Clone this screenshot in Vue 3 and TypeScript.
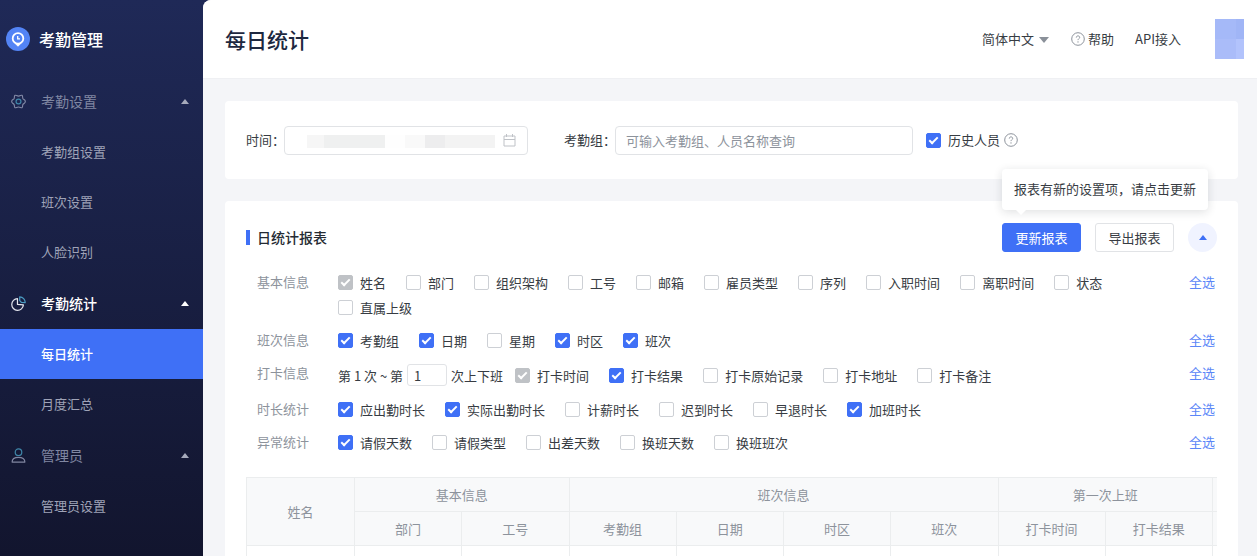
<script setup lang="ts">
import { ref } from 'vue'

interface Option {
  label: string
  checked?: boolean
  locked?: boolean
}
interface OptionRow {
  label: string
  range?: boolean
  options: Option[]
}
interface MenuGroup {
  title: string
  icon: 'gear' | 'pie' | 'user'
  current?: boolean
  items: { title: string; active?: boolean }[]
}

const menu: MenuGroup[] = [
  { title: '考勤设置', icon: 'gear', items: [{ title: '考勤组设置' }, { title: '班次设置' }, { title: '人脸识别' }] },
  { title: '考勤统计', icon: 'pie', current: true, items: [{ title: '每日统计', active: true }, { title: '月度汇总' }] },
  { title: '管理员', icon: 'user', items: [{ title: '管理员设置' }] },
]

const rows = ref<OptionRow[]>([
  {
    label: '基本信息',
    options: [
      { label: '姓名', checked: true, locked: true },
      { label: '部门' },
      { label: '组织架构' },
      { label: '工号' },
      { label: '邮箱' },
      { label: '雇员类型' },
      { label: '序列' },
      { label: '入职时间' },
      { label: '离职时间' },
      { label: '状态' },
      { label: '直属上级' },
    ],
  },
  {
    label: '班次信息',
    options: [
      { label: '考勤组', checked: true },
      { label: '日期', checked: true },
      { label: '星期' },
      { label: '时区', checked: true },
      { label: '班次', checked: true },
    ],
  },
  {
    label: '打卡信息',
    range: true,
    options: [
      { label: '打卡时间', checked: true, locked: true },
      { label: '打卡结果', checked: true },
      { label: '打卡原始记录' },
      { label: '打卡地址' },
      { label: '打卡备注' },
    ],
  },
  {
    label: '时长统计',
    options: [
      { label: '应出勤时长', checked: true },
      { label: '实际出勤时长', checked: true },
      { label: '计薪时长' },
      { label: '迟到时长' },
      { label: '早退时长' },
      { label: '加班时长', checked: true },
    ],
  },
  {
    label: '异常统计',
    options: [
      { label: '请假天数', checked: true },
      { label: '请假类型' },
      { label: '出差天数' },
      { label: '换班天数' },
      { label: '换班班次' },
    ],
  },
])

const subColumns = ['部门', '工号', '考勤组', '日期', '时区', '班次', '打卡时间', '打卡结果']
const history = ref(true)
const times = ref('1')

function selectAll(row: OptionRow) {
  row.options.forEach((o) => {
    if (!o.locked) o.checked = true
  })
}
</script>

<template>
  <div class="layout">
    <aside class="sidebar">
      <div class="brand">
        <svg class="brand-logo" viewBox="0 0 24 24">
          <circle cx="12" cy="12" r="12" fill="#5384f5" />
          <path d="M12 19.200 8.200 15.500h7.600z" fill="#fff" stroke="#fff" stroke-linejoin="round" />
          <circle cx="12" cy="11.400" r="5.300" fill="#5384f5" stroke="#fff" stroke-width="1.800" />
          <path d="M11.700 9v2.800H14" fill="none" stroke="#fff" stroke-width="1.300" />
        </svg>
        <span>考勤管理</span>
      </div>
      <nav>
        <section v-for="group in menu" :key="group.title">
          <button type="button" class="group" :class="{ current: group.current }">
            <svg v-if="group.icon === 'gear'" class="group-icon" viewBox="0 0 16 16" fill="none">
              <path
                d="M4.300 1.400C5.200.9 6.200 2.200 8 2.200s2.800-1.300 3.700-.8c1.200.7.300 2.200 1 3.500.8 1.300 2.600 1.100 2.600 3.100s-1.800 1.800-2.600 3.100c-.7 1.300.2 2.800-1 3.500-.9.500-1.900-.8-3.700-.8s-2.800 1.300-3.700.8c-1.200-.7-.3-2.200-1-3.500C2.500 9.800.7 10 .7 8s1.800-1.800 2.600-3.100c.7-1.300-.2-2.800 1-3.500z"
                stroke="#8289a6"
                stroke-width="1.200"
              />
              <circle cx="8" cy="8" r="2.600" stroke="#3f86a8" stroke-width="1.300" />
            </svg>
            <svg v-else-if="group.icon === 'pie'" class="group-icon" viewBox="0 0 16 16" fill="none">
              <path d="M6.900 2.900A6.200 6.200 0 1 0 13.200 9.500L6.900 9z" stroke="#e4e6ee" stroke-width="1.300" stroke-linejoin="round" />
              <path d="M9.300.9a6 6 0 0 1 5.900 6.100l-4.200-.3-1.700-1.700z" stroke="#4b9cc2" stroke-width="1.300" stroke-linejoin="round" />
            </svg>
            <svg v-else class="group-icon" viewBox="0 0 16 16" fill="none">
              <circle cx="8" cy="4.500" r="3.500" stroke="#3f86a8" stroke-width="1.300" />
              <path d="M1.200 15c0-3.200 2.600-5 6.800-5s6.800 1.800 6.800 5z" stroke="#8085a0" stroke-width="1.300" stroke-linejoin="round" />
            </svg>
            <span class="group-title">{{ group.title }}</span>
            <svg class="group-caret" viewBox="0 0 8 5"><path d="M4 0 8 5H0z" fill="currentColor" /></svg>
          </button>
          <a v-for="item in group.items" :key="item.title" href="#" class="item" :class="{ active: item.active }">{{ item.title }}</a>
        </section>
      </nav>
    </aside>

    <main class="main">
      <header class="header">
        <h1>每日统计</h1>
        <div class="tools">
          <div class="lang">
            <select aria-label="语言">
              <option>简体中文</option>
            </select>
            <svg viewBox="0 0 10 6"><path d="M0 0h10L5 6z" fill="#8a9099" /></svg>
          </div>
          <a href="#" class="help">
            <svg class="question" viewBox="0 0 14 14" fill="none">
              <circle cx="7" cy="7" r="6.300" stroke="currentColor" />
              <path d="M5.300 5.600C5.300 4.500 6 3.900 7 3.900s1.700.6 1.700 1.500c0 1.200-1.700 1.300-1.700 2.700" stroke="currentColor" />
              <circle cx="7" cy="9.900" r=".7" fill="currentColor" />
            </svg>
            帮助
          </a>
          <a href="#" class="api">API接入</a>
          <svg class="avatar" viewBox="0 0 29 40" preserveAspectRatio="none">
            <path d="M0 0h29v40H0z" fill="#a5b9f8" />
            <path d="M0 20h29v20H0z" fill="#aabcf9" />
            <path d="M21 0h8v20h-8z" fill="#a0b5f6" />
            <path d="M21 20h8v20h-8z" fill="#b2c3fc" />
          </svg>
        </div>
      </header>

      <form class="card filters" @submit.prevent>
        <label class="short" for="date">时间：</label>
        <div class="field date">
          <input id="date" type="text" readonly />
          <span class="mask"><i /><i /><i /><i /><i /><i /></span>
          <svg class="calendar" viewBox="0 0 13 13" fill="none" stroke="#bfc2c7">
            <path d="M1 2h11v10H1zM1 5.500h11M3.500 0v3M9.500 0v3" />
          </svg>
        </div>
        <label class="long" for="group">考勤组：</label>
        <div class="field search">
          <input id="group" type="text" placeholder="可输入考勤组、人员名称查询" />
        </div>
        <label class="check"><input v-model="history" type="checkbox" />历史人员</label>
        <svg class="question" viewBox="0 0 14 14" fill="none">
          <circle cx="7" cy="7" r="6.300" stroke="currentColor" />
          <path d="M5.300 5.600C5.300 4.500 6 3.900 7 3.900s1.700.6 1.700 1.500c0 1.200-1.700 1.300-1.700 2.700" stroke="currentColor" />
          <circle cx="7" cy="9.900" r=".7" fill="currentColor" />
        </svg>
      </form>

      <section class="card report">
        <div class="report-head">
          <h2>日统计报表</h2>
          <div class="actions">
            <div class="update">
              <button type="button" class="btn primary">更新报表</button>
              <div class="tip" role="tooltip">报表有新的设置项，请点击更新</div>
            </div>
            <button type="button" class="btn">导出报表</button>
            <button type="button" class="fold" aria-label="收起">
              <svg viewBox="0 0 8 5"><path d="M4 0 8 5H0z" fill="#3f70f6" /></svg>
            </button>
          </div>
        </div>

        <div class="rows">
          <div v-for="row in rows" :key="row.label" class="row">
            <span class="row-label">{{ row.label }}</span>
            <div class="options" :class="{ ranged: row.range }">
              <label v-if="row.range" class="range">
                第 1 次 ~ 第
                <input v-model="times" class="times" type="text" />
                次上下班
              </label>
              <label v-for="o in row.options" :key="o.label" class="check">
                <input v-model="o.checked" type="checkbox" :disabled="o.locked" />{{ o.label }}
              </label>
            </div>
            <button type="button" class="all" @click="selectAll(row)">全选</button>
          </div>
        </div>

        <table>
          <colgroup>
            <col class="col-name" />
            <col v-for="c in subColumns" :key="c" />
            <col class="col-rest" />
          </colgroup>
          <thead>
            <tr>
              <th rowspan="2">姓名</th>
              <th colspan="2">基本信息</th>
              <th colspan="4">班次信息</th>
              <th colspan="2">第一次上班</th>
              <th></th>
            </tr>
            <tr>
              <th v-for="c in subColumns" :key="c">{{ c }}</th>
              <th></th>
            </tr>
          </thead>
          <tbody>
            <tr>
              <td v-for="n in subColumns.length + 2" :key="n"></td>
            </tr>
          </tbody>
        </table>
      </section>
    </main>
  </div>
</template>

<style>
body {
  margin: 0;
  background: #1b2149;
}
</style>

<style scoped>
* {
  box-sizing: border-box;
}
.layout {
  display: flex;
  height: 100vh;
  overflow: hidden;
  background: linear-gradient(#1f2957, #12152e);
  font: 13px/20px 'Noto Sans CJK SC', sans-serif;
  color: #373c43;
}
button,
input,
select {
  margin: 0;
  padding: 0;
  border: 0;
  background: none;
  font: inherit;
  color: inherit;
}
button {
  cursor: pointer;
}
a {
  color: inherit;
  text-decoration: none;
}

.sidebar {
  flex: 0 0 203px;
}
.brand {
  display: flex;
  align-items: center;
  gap: 9px;
  height: 75px;
  padding: 2px 0 0 6px;
  font-size: 16px;
  font-weight: 500;
  color: #fff;
}
.brand-logo {
  width: 24px;
  height: 24px;
}
.group {
  display: flex;
  align-items: center;
  width: 100%;
  height: 52px;
  padding: 0 14px 0 11px;
  font-size: 14px;
  color: #8087a2;
  text-align: left;
}
.group.current {
  font-weight: 500;
  color: #fff;
}
.group-icon {
  width: 15px;
  height: 15px;
  margin-right: 15px;
}
.group-title {
  flex: 1;
}
.group-caret {
  width: 8px;
  height: 5px;
  color: #a6aabb;
}
.current .group-caret {
  color: #fff;
}
.item {
  display: block;
  padding-left: 41px;
  line-height: 50px;
  color: #9fa3b7;
}
.item.active {
  background: #3f70f6;
  font-weight: 500;
  color: #fff;
}

.main {
  flex: 1;
  min-width: 0;
  overflow: hidden;
  border-top-left-radius: 8px;
  background: #f4f5f8;
}
.header {
  display: flex;
  align-items: center;
  justify-content: space-between;
  height: 79px;
  padding: 0 13px 0 22px;
  border-bottom: 1px solid #eff0f3;
  background: #fff;
}
h1 {
  margin: 0;
  font-size: 21px;
  line-height: 30px;
  font-weight: 500;
  color: #1d2840;
}
.tools {
  display: flex;
  align-items: center;
}
.lang {
  position: relative;
  margin-right: 22px;
}
.lang select {
  display: block;
  height: 20px;
  padding-right: 14px;
  appearance: none;
}
.lang svg {
  position: absolute;
  right: 0;
  top: 8px;
  width: 10px;
  height: 6px;
  pointer-events: none;
}
.help {
  display: flex;
  align-items: center;
  gap: 3px;
  margin-right: 21px;
}
.question {
  width: 14px;
  height: 14px;
  color: #8d939c;
}
.avatar {
  width: 29px;
  height: 40px;
  margin-left: 34px;
}

.card {
  margin: 22px 19px 0 22px;
  border-radius: 4px;
  background: #fff;
}
.filters {
  display: flex;
  align-items: center;
  height: 78px;
  padding: 0 21px;
}
.short {
  flex: 0 0 38px;
  min-width: 0;
  white-space: nowrap;
}
.long {
  flex: 0 0 51px;
  min-width: 0;
  margin-left: 36px;
  white-space: nowrap;
}
.field {
  position: relative;
  height: 29px;
  border: 1px solid #e1e3e6;
  border-radius: 4px;
}
.field input {
  display: block;
  width: 100%;
  height: 100%;
  padding: 0 10px;
  outline: none;
}
.field input::placeholder {
  color: #8d939c;
  opacity: 1;
}
.date {
  flex: 0 1 244px;
}
.search {
  flex: 0 1 298px;
  margin-right: 13px;
}
.mask {
  position: absolute;
  left: 22px;
  right: 32px;
  top: 8px;
  display: flex;
  height: 13px;
}
.mask i {
  flex: 20;
  background: #f0f1f1;
}
.mask i:nth-child(1) {
  flex: 17;
  background: #f6f6f6;
}
.mask i:nth-child(2) {
  flex: 61;
  background: #eff0f0;
}
.mask i:nth-child(3) {
  background: #fefefe;
}
.mask i:nth-child(4) {
  background: #f9f9f9;
}
.mask i:nth-child(5) {
  background: #ededee;
}
.mask i:nth-child(6) {
  flex: 50;
  background: #f3f3f3;
}
.calendar {
  position: absolute;
  right: 11px;
  top: 7px;
  width: 13px;
  height: 13px;
}

.check {
  display: flex;
  align-items: center;
  gap: 7px;
  height: 25px;
  white-space: nowrap;
}
.filters .question {
  margin-left: 4px;
}
.check input {
  display: grid;
  place-items: center;
  width: 15px;
  height: 15px;
  border: 1px solid #cdd0d5;
  border-radius: 2px;
  background: #fff;
  appearance: none;
}
.check input:checked {
  border-color: #3f70f6;
  background: #3f70f6;
}
.check input:disabled {
  border-color: #bfc2c6;
  background: #bfc2c6;
}
.check input:checked::after {
  content: '';
  box-sizing: border-box;
  width: 9px;
  height: 5px;
  margin-bottom: 2px;
  border: solid #fff;
  border-width: 0 0 2px 2px;
  transform: rotate(-45deg);
}

.report {
  padding: 22px 21px 0;
}
.report-head {
  display: flex;
  align-items: center;
  justify-content: space-between;
  height: 29px;
}
h2 {
  margin: 0;
  padding-left: 7px;
  border-left: 4px solid #3f70f6;
  font-size: 14px;
  line-height: 15px;
  font-weight: 500;
  color: #262b33;
}
.actions {
  display: flex;
  align-items: center;
  gap: 14px;
}
.update {
  position: relative;
}
.btn {
  display: block;
  width: 79px;
  height: 29px;
  border: 1px solid #e1e3e6;
  border-radius: 3px;
}
.btn.primary {
  border-color: #3f70f6;
  background: #3f70f6;
  color: #fff;
}
.tip {
  position: absolute;
  left: 0;
  bottom: 42px;
  padding: 10px 12px 11px;
  border-radius: 4px;
  background: #fff;
  box-shadow: 0 2px 10px rgba(31, 35, 41, 0.14);
  white-space: nowrap;
}
.tip::after {
  content: '';
  position: absolute;
  left: 14px;
  top: 100%;
  border: 5px solid transparent;
  border-top-color: #fff;
  border-bottom: 0;
}
.fold {
  display: grid;
  place-items: center;
  width: 29px;
  height: 29px;
  border-radius: 50%;
  background: #f0f3ff;
}
.fold svg {
  width: 8px;
  height: 5px;
}

.rows {
  display: grid;
  gap: 8px;
  margin-top: 18px;
}
.row {
  display: flex;
  align-items: flex-start;
  line-height: 23px;
}
.row-label {
  flex: 0 0 92px;
  padding-left: 11px;
  color: #8d939c;
}
.options {
  flex: 1;
  display: flex;
  flex-wrap: wrap;
  column-gap: 20px;
}
.options.ranged {
  align-items: center;
  min-height: 28px;
}
.range {
  display: flex;
  align-items: center;
  gap: 4px;
  margin-right: -8px;
}
.times {
  width: 40px;
  height: 22px;
  padding-left: 6px;
  border: 1px solid #e1e3e6;
  border-radius: 3px;
}
.all {
  flex: 0 0 28px;
  color: #5b86f7;
  text-align: left;
}

table {
  width: 100%;
  margin-top: 22px;
  border-top: 1px solid #ebedee;
  border-left: 1px solid #ebedee;
  border-spacing: 0;
  table-layout: fixed;
}
.col-name {
  width: 108px;
}
.col-rest {
  width: 4px;
}
th,
td {
  height: 35px;
  padding: 0;
  border-right: 1px solid #ebedee;
  border-bottom: 1px solid #ebedee;
  font-weight: 400;
}
th {
  height: 34px;
  background: #f8f9fa;
  color: #8d939c;
}
th:last-child,
td:last-child {
  border-right: 0;
}
</style>
